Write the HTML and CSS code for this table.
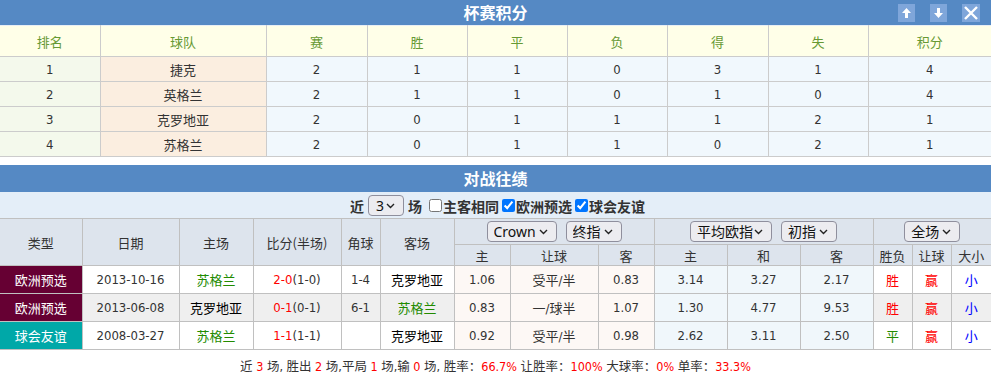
FILE: index.html
```html
<!DOCTYPE html>
<html lang="zh">
<head>
<meta charset="utf-8">
<title>杯赛积分</title>
<link rel="stylesheet" href="styles.css">
</head>
<body>
<div class="page">
  <div class="titlebar">
    <span class="title-text">杯赛积分</span>
    <div class="tools">
      <span class="tool"><svg width="17" height="18" viewBox="0 0 17 18"><path d="M8.5 4 L13 9 L10 9 L10 14 L7 14 L7 9 L4 9 Z" fill="#fff"/></svg></span>
      <span class="tool"><svg width="17" height="18" viewBox="0 0 17 18"><path d="M8.5 14 L13 9 L10 9 L10 4 L7 4 L7 9 L4 9 Z" fill="#fff"/></svg></span>
      <span class="tool"><svg width="18" height="18" viewBox="0 0 18 18"><path d="M3 3 L15 15 M15 3 L3 15" stroke="#fff" stroke-width="2.4"/></svg></span>
    </div>
  </div>
  <table class="standings">
    <colgroup>
      <col style="width:100px"><col style="width:166px"><col style="width:101px"><col style="width:100px"><col style="width:100px"><col style="width:100px"><col style="width:101px"><col style="width:100px"><col style="width:123px">
    </colgroup>
    <tr class="shead"><th>排名</th><th>球队</th><th>赛</th><th>胜</th><th>平</th><th>负</th><th>得</th><th>失</th><th>积分</th></tr>
    <tr><td class="rank">1</td><td class="team">捷克</td><td>2</td><td>1</td><td>1</td><td>0</td><td>3</td><td>1</td><td>4</td></tr>
    <tr><td class="rank">2</td><td class="team">英格兰</td><td>2</td><td>1</td><td>1</td><td>0</td><td>1</td><td>0</td><td>4</td></tr>
    <tr><td class="rank">3</td><td class="team">克罗地亚</td><td>2</td><td>0</td><td>1</td><td>1</td><td>1</td><td>2</td><td>1</td></tr>
    <tr><td class="rank">4</td><td class="team">苏格兰</td><td>2</td><td>0</td><td>1</td><td>1</td><td>0</td><td>2</td><td>1</td></tr>
  </table>

  <div class="titlebar second">
    <span class="title-text">对战往绩</span>
  </div>
  <div class="filters">
    <span class="flabel">近</span>
    <select class="sel sel-n"><option>3</option></select>
    <span class="flabel">场</span>
    <label class="chk"><input type="checkbox">主客相同</label>
    <label class="chk"><input type="checkbox" checked>欧洲预选</label><label class="chk"><input type="checkbox" checked>球会友谊</label>
  </div>
  <table class="h2h">
    <colgroup>
      <col style="width:82px"><col style="width:97px"><col style="width:74px"><col style="width:88px"><col style="width:39px"><col style="width:74px"><col style="width:56px"><col style="width:88px"><col style="width:56px"><col style="width:73px"><col style="width:73px"><col style="width:73px"><col style="width:39px"><col style="width:39px"><col style="width:40px">
    </colgroup>
    <tr class="hrow1">
      <th rowspan="2">类型</th><th rowspan="2">日期</th><th rowspan="2">主场</th><th rowspan="2">比分(半场)</th><th rowspan="2">角球</th><th rowspan="2">客场</th>
      <th colspan="3"><div class="selrow"><select class="sel sel-crown"><option>Crown</option></select><select class="sel sel-s"><option>终指</option></select></div></th>
      <th colspan="3"><div class="selrow"><select class="sel sel-avg"><option>平均欧指</option></select><select class="sel sel-s"><option>初指</option></select></div></th>
      <th colspan="3"><div class="selrow"><select class="sel sel-s"><option>全场</option></select></div></th>
    </tr>
    <tr class="hrow2">
      <th>主</th><th>让球</th><th>客</th><th>主</th><th>和</th><th>客</th><th>胜负</th><th>让球</th><th>大小</th>
    </tr>
    <tr class="drow">
      <td class="type euro">欧洲预选</td><td>2013-10-16</td><td class="green">苏格兰</td><td><span class="red">2-0</span>(1-0)</td><td>1-4</td><td class="black">克罗地亚</td>
      <td class="odd-a">1.06</td><td class="odd-a">受平/半</td><td class="odd-a">0.83</td>
      <td class="odd-b">3.14</td><td class="odd-b">3.27</td><td class="odd-b">2.17</td>
      <td class="red">胜</td><td class="red">赢</td><td class="blue">小</td>
    </tr>
    <tr class="drow alt">
      <td class="type euro">欧洲预选</td><td>2013-06-08</td><td class="black">克罗地亚</td><td><span class="red">0-1</span>(0-1)</td><td>6-1</td><td class="green">苏格兰</td>
      <td class="odd-a">0.83</td><td class="odd-a">一/球半</td><td class="odd-a">1.07</td>
      <td class="odd-b">1.30</td><td class="odd-b">4.77</td><td class="odd-b">9.53</td>
      <td class="red">胜</td><td class="red">赢</td><td class="blue">小</td>
    </tr>
    <tr class="drow">
      <td class="type friendly">球会友谊</td><td>2008-03-27</td><td class="green">苏格兰</td><td><span class="red">1-1</span>(1-1)</td><td></td><td class="black">克罗地亚</td>
      <td class="odd-a">0.92</td><td class="odd-a">受平/半</td><td class="odd-a">0.98</td>
      <td class="odd-b">2.62</td><td class="odd-b">3.11</td><td class="odd-b">2.50</td>
      <td class="green">平</td><td class="red">赢</td><td class="blue">小</td>
    </tr>
  </table>
  <div class="summary">
    近 <span class="red">3</span> 场, 胜出 <span class="red">2</span> 场,平局 <span class="red">1</span> 场,输 <span class="red">0</span> 场, 胜率：<span class="red">66.7%</span> 让胜率：<span class="red">100%</span> 大球率：<span class="red">0%</span> 单率：<span class="red">33.3%</span>
  </div>
</div>
</body>
</html>
```

FILE: styles.css
```css
html, body {
  margin: 0;
  padding: 0;
  background: #fff;
}
body {
  font-family: "DejaVu Sans Condensed", "DejaVu Sans", "Noto Sans CJK SC", sans-serif;
  font-size: 13px;
  color: #333;
}
.page {
  width: 991px;
}
.titlebar {
  position: relative;
  height: 25px;
  background: #5589c4;
  display: flex;
  align-items: center;
  justify-content: center;
}
.titlebar.second {
  height: 27px;
  margin-top: 8px;
}
.title-text {
  color: #fff;
  font-family: "Noto Sans CJK SC", sans-serif;
  font-weight: bold;
  font-size: 16px;
  line-height: 25px;
}
.tools {
  position: absolute;
  right: 11px;
  top: 4px;
  display: flex;
  gap: 15px;
}
.tool {
  width: 17px;
  height: 18px;
  background: #7fa6da;
  display: flex;
  align-items: center;
  justify-content: center;
}
.tool:last-child {
  width: 18px;
}
table {
  border-collapse: collapse;
  table-layout: fixed;
  width: 991px;
}
.standings {
  border-top: 1px solid #e8eef5;
}
.standings th, .standings td {
  border: 1px solid #cccccc;
  text-align: center;
  padding: 0;
  font-weight: normal;
}
.standings tr:first-child th { border-top: none; }
.standings th:first-child, .standings td:first-child { border-left: none; }
.standings th:last-child, .standings td:last-child { border-right: none; }
.shead th {
  height: 30px;
  background: #ffffe8;
  color: #669933;
  font-family: "Noto Sans CJK SC", sans-serif;
  font-size: 13px;
}
.standings td {
  height: 24px;
  background: #f1f8fd;
  color: #333;
}
.standings td.rank {
  background: #f4f9ec;
}
.standings td.team {
  background: #fbeee0;
  font-family: "Noto Sans CJK SC", sans-serif;
}
.filters {
  height: 26px;
  background: #e4eef8;
  display: flex;
  align-items: center;
  justify-content: center;
  font-family: "Noto Sans CJK SC", sans-serif;
  font-size: 14px;
  font-weight: bold;
  color: #333;
  padding-top: 1px;
  box-sizing: border-box;
}
.flabel {
  margin: 0 4px;
}
.chk {
  display: inline-flex;
  align-items: center;
}
.chk input {
  margin: 0 1px 0 3px;
  width: 13px;
  height: 13px;
}
.sel {
  -webkit-appearance: none;
  appearance: none;
  height: 21px;
  font-family: "Noto Sans", "Noto Sans CJK SC", sans-serif;
  font-size: 14px;
  font-weight: normal;
  color: #111;
  border: 1px solid #8f8f9d;
  border-radius: 4px;
  background-color: #ececf0;
  background-image: url("data:image/svg+xml;utf8,<svg xmlns='http://www.w3.org/2000/svg' width='9' height='6' viewBox='0 0 9 6'><path d='M1 1 L4.5 4.5 L8 1' fill='none' stroke='%23222' stroke-width='1.4'/></svg>");
  background-repeat: no-repeat;
  background-position: right 8px center;
  padding: 0 0 0 6px;
  box-sizing: border-box;
  line-height: 19px;
}
.sel-n { width: 36px; padding-left: 7px; }
.sel-crown { width: 70px; }
.sel-s { width: 56px; }
.sel-avg { width: 82px; }
.h2h {
  border-top: 1px solid #c0c0c0;
}
.h2h th, .h2h td {
  border: 1px solid #c0c0c0;
  text-align: center;
  padding: 0;
  font-weight: normal;
}
.h2h th:first-child, .h2h td:first-child { border-left: none; }
.h2h th:last-child, .h2h td:last-child { border-right: none; }
.h2h th {
  background: #dde4ed;
  color: #333;
  font-family: "Noto Sans CJK SC", sans-serif;
  font-size: 13px;
}
.hrow1 th { height: 25px; }
.hrow2 th { height: 20px; }
.selrow {
  display: flex;
  justify-content: center;
  gap: 9px;
}
.drow td {
  height: 27px;
  background: #fff;
  color: #333;
}
.drow.alt td {
  background: #efefef;
}
.drow td.odd-a { background: #fdf8f5; }
.drow td.odd-b { background: #f0f7fb; }
.drow td.type {
  color: #fff;
  font-family: "Noto Sans CJK SC", sans-serif;
}
.drow td.euro { background: #660033; }
.drow td.friendly { background: #00a8a8; }
.red { color: #ff0000; }
.drow td.red { color: #ff0000; }
.drow td.green { color: #228b00; }
.drow td.blue { color: #0000ff; }
.drow td.black { color: #000; }
.summary {
  text-align: center;
  padding-top: 6px;
  font-size: 12.5px;
  color: #333;
}
```
